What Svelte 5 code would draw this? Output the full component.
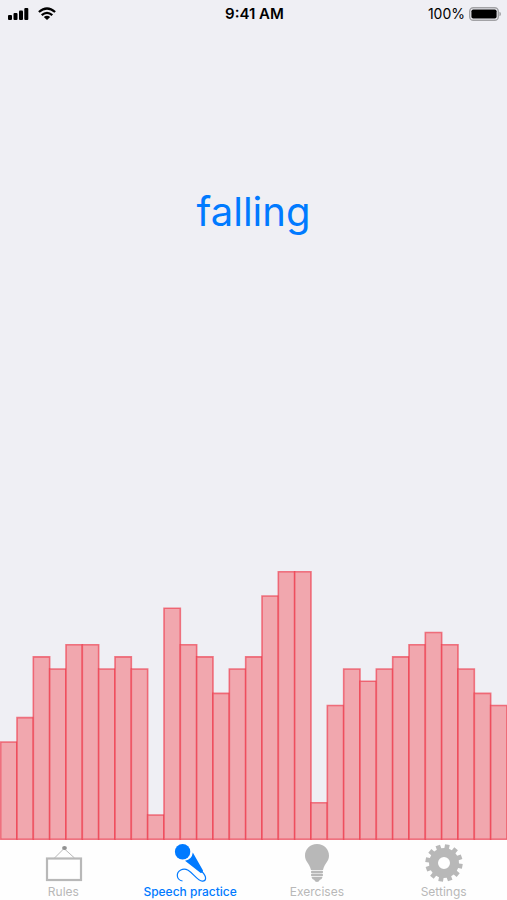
<script>
  const levels = [
    8, 10, 15, 14, 16, 16, 14, 15, 14, 2,
    19, 16, 15, 12, 14, 15, 20, 22, 22, 3,
    11, 14, 13, 14, 15, 16, 17, 16, 14, 12, 11
  ];
  const maxLevel = 22;

  const tabs = [
    { id: 'rules', label: 'Rules' },
    { id: 'speech', label: 'Speech practice' },
    { id: 'exercises', label: 'Exercises' },
    { id: 'settings', label: 'Settings' }
  ];
  let active = $state('speech');

  function gearPath(teeth, outer, root) {
    const step = (Math.PI * 2) / teeth;
    const at = (r, a) => `${(20 + r * Math.sin(a)).toFixed(2)} ${(20 - r * Math.cos(a)).toFixed(2)}`;
    const parts = [];
    for (let i = 0; i < teeth; i++) {
      const a = (i + 0.35) * step;
      parts.push(at(root, a - step * 0.3), at(outer, a - step * 0.24), at(outer, a + step * 0.24), at(root, a + step * 0.3));
    }
    return `M${parts.join('L')}Z M26 20a6 6 0 1 0-12 0a6 6 0 1 0 12 0Z`;
  }
  const gear = gearPath(12, 18.8, 15);
</script>

<div class="app">
  <header>
    <div class="signal">
      <svg width="21" height="14" viewBox="0 0 21 14" aria-hidden="true">
        <rect x="0" y="8" width="4" height="5" rx="1" />
        <rect x="5.5" y="6" width="4" height="7" rx="1" />
        <rect x="11" y="3.5" width="4" height="9.5" rx="1" />
        <rect x="16.3" y="1" width="4" height="12" rx="1" />
      </svg>
      <svg width="18" height="14" viewBox="0 0 18 14" aria-hidden="true">
        <path d="M.9 5Q9-2 17.1 5M3.7 8.1Q9 3.6 14.3 8.1" fill="none" stroke="#000" stroke-width="2.3" />
        <path d="M5.8 9.9Q9 7.4 12.2 9.9L9 13Z" />
      </svg>
    </div>
    <time>9:41 AM</time>
    <div class="battery">
      <span>100%</span>
      <svg width="32" height="14" viewBox="0 0 32 14" aria-hidden="true">
        <rect x="0.7" y="0.7" width="28.6" height="12.6" rx="3.6" fill="none" stroke="#a2a2a5" stroke-width="1.4" />
        <rect x="2.4" y="2.4" width="25.2" height="9.2" rx="1.8" />
        <path d="M30.4 4.8q1.6.5 1.6 2.2t-1.6 2.2Z" fill="#a2a2a5" />
      </svg>
    </div>
  </header>

  <main>
    <h1>falling</h1>
    <svg class="chart" viewBox="-0.04 -0.06 {levels.length + 0.04} {maxLevel + 0.12}" preserveAspectRatio="none" role="img" aria-label="Pitch levels">
      {#each levels as level, i}
        <rect x={i} y={maxLevel - level} width="1" height={level} />
      {/each}
    </svg>
  </main>

  <nav>
    {#each tabs as tab}
      <button class:active={active === tab.id} onclick={() => (active = tab.id)}>
        <svg width="40" height="40" viewBox="0 0 40 40" aria-hidden="true">
          {#if tab.id === 'rules'}
            <rect x="4" y="15.5" width="34" height="21.5" fill="none" stroke="currentColor" stroke-width="2.2" />
            <path d="M11.5 15L21 5.5L31.5 15" fill="none" stroke="currentColor" stroke-width="1" />
            <ellipse cx="21.5" cy="5" rx="2.4" ry="2" fill="#929292" />
          {:else if tab.id === 'speech'}
            <circle cx="12.6" cy="8.7" r="7.7" />
            <path d="M22.8 9.6A9.4 9.4 0 0 1 15 17.8L30.7 29.9Q33.2 30.2 33 27.5Z" />
            <path d="M31.8 28.5C37.5 34 36 38.4 32.3 38.2C25.5 37.8 20 22.6 10.8 27C5.8 29.6 6 36.6 12.5 38" fill="none" stroke="currentColor" stroke-width="1.2" />
          {:else if tab.id === 'exercises'}
            <path d="M20 1C12.8 1 8 6.3 8 12.7C8 18.5 12.5 20 14 27H26C27.5 20 32 18.5 32 12.7C32 6.3 27.2 1 20 1Z" />
            <rect x="14" y="27.7" width="12" height="2.5" rx="1" />
            <rect x="14" y="30.8" width="12" height="2.5" rx="1" />
            <path d="M14.5 34H25.5Q25 36.5 22.7 37Q22 39 20 39T17.3 37Q15 36.5 14.5 34Z" />
          {:else}
            <path d={gear} fill-rule="evenodd" />
          {/if}
        </svg>
        <span>{tab.label}</span>
      </button>
    {/each}
  </nav>
</div>

<style>
  .app {
    min-height: 100vh;
    display: flex;
    flex-direction: column;
    background: #efeff4;
    font-family: Inter, "Liberation Sans", sans-serif;
  }
  header {
    display: grid;
    grid-template-columns: 1fr auto 1fr;
    align-items: center;
    height: 27px;
    padding: 0 6px 0 8px;
    font-size: 14px;
    color: #000;
  }
  .signal, .battery {
    display: flex;
    align-items: center;
  }
  .signal { gap: 9px; }
  .battery {
    justify-content: flex-end;
    gap: 4px;
  }
  time {
    font-size: 15px;
    font-weight: 600;
  }
  main {
    flex: 1;
    display: flex;
    flex-direction: column;
    justify-content: space-between;
  }
  h1 {
    margin: 158px 0 0;
    text-align: center;
    font-size: 40px;
    line-height: 54px;
    font-weight: 400;
    color: #007aff;
  }
  .chart {
    display: block;
    width: 100%;
    height: 269px;
    overflow: hidden;
  }
  .chart rect {
    fill: #f1a7ae;
    stroke: rgba(238, 50, 68, 0.62);
    stroke-width: 1.6px;
    vector-effect: non-scaling-stroke;
  }
  nav {
    display: grid;
    grid-template-columns: repeat(4, 1fr);
    height: 60px;
    background: #fefefe;
  }
  button {
    display: flex;
    flex-direction: column;
    align-items: center;
    gap: 1px;
    padding: 3px 0 0;
    border: 0;
    background: none;
    color: #b8b8b8;
    font: 400 12px/16px Inter, "Liberation Sans", sans-serif;
    white-space: nowrap;
    cursor: pointer;
  }
  button svg { fill: currentColor; }
  button.active {
    color: #007aff;
    font-weight: 500;
  }
</style>
